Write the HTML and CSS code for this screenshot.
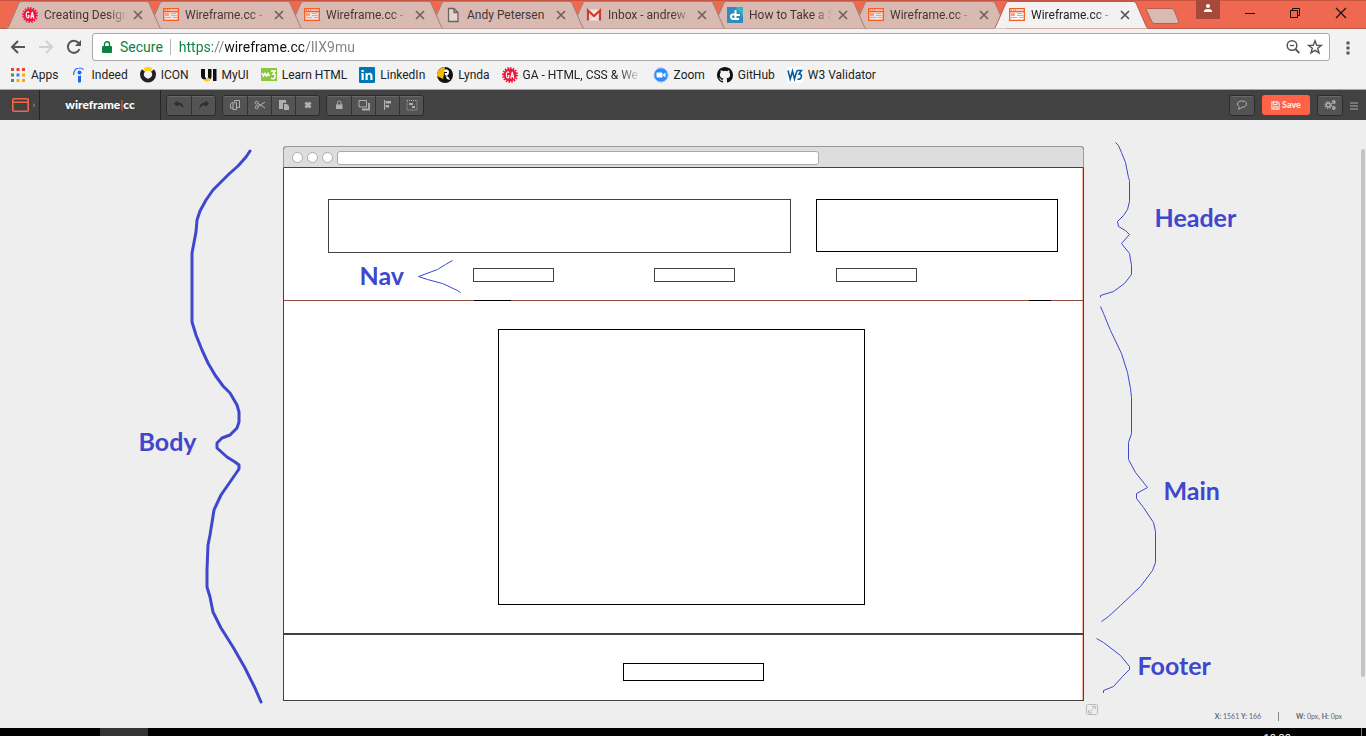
FILE: index.html
```html
<!DOCTYPE html>
<html lang="en">
<head>
<meta charset="utf-8">
<title>Wireframe.cc</title>
<link rel="stylesheet" href="styles.css">
</head>
<body>
<svg class="defs" aria-hidden="true">
  <symbol id="tab-shape" viewBox="0 0 154 29"><path d="M0 28.500L1.500 27L12 3Q13 1.500 15 1.500H139Q141 1.500 142 3L152.500 27L154 28.500"/></symbol>
  <symbol id="i-wire" viewBox="0 0 16 16"><path fill="#fff" d="M1 2h14v12H1z" opacity=".6"/><path fill="none" stroke="#ff5a1f" stroke-width="1.300" d="M.7 1.700h14.600v11.600H.7zM0 4.500h16"/><path stroke="#ff5a1f" stroke-dasharray="1 1" d="M2 3h5"/><path fill="#ff9d75" d="M2 6h4v3H2zM8 6h5v1H8zM8 8h6v1H8zM2 10h6v1H2zM10 10h4v1h-4z"/></symbol>
  <symbol id="i-ga" viewBox="0 0 16 16"><circle cx="8" cy="8" r="6.500" fill="#f0143c"/><circle cx="8" cy="8" r="7" fill="none" stroke="#f0143c" stroke-width="2" stroke-dasharray="1.400 1.340"/><path fill="none" stroke="#fff" stroke-width="1.200" d="M7 5.700Q6.500 4.600 5.300 5Q4.300 5.400 4.300 8T5.600 11Q7 11 7 8.500H5.800M8.800 11.500L10.300 5L11.800 11.500M9.200 9.500h2.200"/></symbol>
  <symbol id="i-close" viewBox="0 0 10 10"><path stroke="currentColor" stroke-width="1.700" d="M1 1L9 9M9 1L1 9"/></symbol>
</svg>

<header class="browser">
  <div class="tabstrip">
    <div class="tabs">
      <div class="tab"><svg class="shape"><use href="#tab-shape"/></svg><svg class="fav"><use href="#i-ga"/></svg><button class="tab-title fade">Creating Design</button><button class="tab-close" aria-label="Close tab"><svg><use href="#i-close"/></svg></button></div>
      <div class="tab"><svg class="shape"><use href="#tab-shape"/></svg><svg class="fav"><use href="#i-wire"/></svg><button class="tab-title fade">Wireframe.cc -</button><button class="tab-close" aria-label="Close tab"><svg><use href="#i-close"/></svg></button></div>
      <div class="tab"><svg class="shape"><use href="#tab-shape"/></svg><svg class="fav"><use href="#i-wire"/></svg><button class="tab-title fade">Wireframe.cc -</button><button class="tab-close" aria-label="Close tab"><svg><use href="#i-close"/></svg></button></div>
      <div class="tab"><svg class="shape"><use href="#tab-shape"/></svg><svg class="fav" viewBox="0 0 16 16"><path fill="#e6d3ce" stroke="#71625f" stroke-width="1.300" d="M3.500 1.500h5.500l4 4v9H3.500zM9 1.500v4h4"/></svg><button class="tab-title">Andy Petersen</button><button class="tab-close" aria-label="Close tab"><svg><use href="#i-close"/></svg></button></div>
      <div class="tab"><svg class="shape"><use href="#tab-shape"/></svg><svg class="fav" viewBox="0 0 16 16"><path fill="#efe5e3" d="M1 2.500h14v11H1z"/><path fill="none" stroke="#d9c7c4" d="M3 13l5-5 5 5"/><path fill="none" stroke="#d5392d" stroke-width="2.200" d="M2 13.500V3.500L8 9l6-5.500v10"/></svg><button class="tab-title fade">Inbox - andrew</button><button class="tab-close" aria-label="Close tab"><svg><use href="#i-close"/></svg></button></div>
      <div class="tab"><svg class="shape"><use href="#tab-shape"/></svg><svg class="fav" viewBox="0 0 16 16"><path fill="#318cbb" d="M0 0h16v16H0z"/><path fill="#31b6c5" d="M8 0h8v9z"/><path fill="none" stroke="#fff" stroke-width="2" d="M8.500 3v10M8.500 8H13M8 7.500H6Q4 7.500 4 9.500T6 12H12"/></svg><button class="tab-title fade">How to Take a S</button><button class="tab-close" aria-label="Close tab"><svg><use href="#i-close"/></svg></button></div>
      <div class="tab"><svg class="shape"><use href="#tab-shape"/></svg><svg class="fav"><use href="#i-wire"/></svg><button class="tab-title fade">Wireframe.cc -</button><button class="tab-close" aria-label="Close tab"><svg><use href="#i-close"/></svg></button></div>
      <div class="tab active"><svg class="shape"><use href="#tab-shape"/></svg><svg class="fav"><use href="#i-wire"/></svg><button class="tab-title fade">Wireframe.cc -</button><button class="tab-close" aria-label="Close tab"><svg><use href="#i-close"/></svg></button></div>
    </div>
    <button class="new-tab" aria-label="New tab"><svg viewBox="0 0 36 18"><path fill="#d9bab3" stroke="#b5604f" d="M2.500 1.500H26Q28 1.500 29 3L33.500 14Q34 16.500 32 16.500H10Q8 16.500 7 15L1.500 3Q1 1.500 2.500 1.500z"/></svg></button>
    <div class="window-controls">
      <button class="profile" aria-label="Profile"><svg viewBox="0 0 24 19"><circle cx="12" cy="6" r="2" fill="#fff"/><path fill="#fff" d="M8 12V11Q8 9 12 9T16 11V12z"/></svg></button>
      <button aria-label="Minimize"><svg viewBox="0 0 46 28"><path stroke="#111" d="M19 13.500h10"/></svg></button>
      <button aria-label="Restore"><svg viewBox="0 0 46 28"><path fill="none" stroke="#111" d="M18.500 10.500h7v7h-7zM20.500 10.500v-2h7v7h-2"/></svg></button>
      <button aria-label="Close"><svg viewBox="0 0 46 28"><path stroke="#111" stroke-width="1.200" d="M18 8L28 18M28 8L18 18"/></svg></button>
    </div>
  </div>

  <div class="navrow">
    <button class="nav-btn" aria-label="Back"><svg viewBox="0 0 16 16"><path d="M15 8H2M8 2L2 8l6 6"/></svg></button>
    <button class="nav-btn" aria-label="Forward" disabled><svg viewBox="0 0 16 16"><path d="M1 8h13M8 2l6 6-6 6"/></svg></button>
    <button class="nav-btn" aria-label="Reload"><svg viewBox="0 0 16 16"><path d="M13.500 10A6 6 0 1 1 12.500 4L14 5.500"/><path class="solid" d="M15 1v6H9z"/></svg></button>
    <form class="omnibox">
      <svg class="lock" viewBox="0 0 10 12"><path fill="#0b8043" d="M1 5h8q1 0 1 1v5q0 1-1 1H1q-1 0-1-1V6q0-1 1-1z"/><path fill="none" stroke="#0b8043" stroke-width="1.400" d="M2.500 5.500V3.200a2.500 2.500 0 0 1 5 0v2.300"/></svg>
      <label for="url">Secure</label>
      <input id="url" type="text" value="https://wireframe.cc/lIX9mu">
      <button type="button" aria-label="Zoom"><svg viewBox="0 0 16 16"><circle cx="7" cy="6.500" r="4.800" fill="none" stroke="#555" stroke-width="1.500"/><path stroke="#555" stroke-width="1.300" d="M4.800 6.500h4.400"/><path stroke="#555" stroke-width="1.800" d="M10.300 10l4 4"/></svg></button>
      <button type="button" aria-label="Bookmark"><svg viewBox="0 0 16 16"><path fill="none" stroke="#555" stroke-width="1.400" d="M8 1.800l1.700 4.400 4.700.2-3.700 2.900 1.300 4.600L8 11.300l-4 2.600 1.300-4.600L1.600 6.400l4.700-.2z"/></svg></button>
    </form>
    <button class="menu-btn" aria-label="Menu"><svg viewBox="0 0 4 14"><path fill="#555" d="M.5 1h3v3h-3zM.5 6h3v3h-3zM.5 11h3v3h-3z"/></svg></button>
  </div>

  <nav class="bookmarks">
    <a href="#"><svg viewBox="0 0 16 16"><path fill="#ea4335" d="M1 1h3v3H1zM6.500 1h3v3h-3zM12 1h3v3h-3z"/><path fill="#34a04f" d="M1 6.500h3v3H1zM1 12h3v3H1z"/><path fill="#2f80ed" d="M6.500 6.500h3v3h-3z"/><path fill="#f9ab00" d="M12 6.500h3v3h-3zM6.500 12h3v3h-3zM12 12h3v3h-3z"/></svg>Apps</a>
    <a href="#"><svg viewBox="0 0 16 16"><circle cx="8.500" cy="5.500" r="2" fill="#2164f3"/><path fill="none" stroke="#2164f3" stroke-width="1.200" d="M2.500 8Q3 1.200 8 1Q10.500 .8 12.500 2.500"/><path fill="#2164f3" d="M7 8.500q1.500 1 3-.300V15q-1.500 1.500-3 0z"/></svg>Indeed</a>
    <a href="#"><svg viewBox="0 0 16 16"><path fill="none" stroke="#222" stroke-width="4" d="M3.500 3.500a6 6 0 1 0 9 0"/><path fill="#ffcd00" d="M4 1q4-2 8 0l-1 3.500q-3-1.500-6 0z"/></svg>ICON</a>
    <a href="#"><svg viewBox="0 0 16 16"><path fill="#111" d="M0 2h4v8l2 2.500H3q-3-1-3-4zM7 2h3.500v8q0 1-1 2L7 11zM12 2h3.500v12H12z"/><path fill="#ffcd00" d="M2.500 12.500Q6 13 7 10.500q1 2 3 1.500-2 3-4.500 2.500-2 0-3-2z"/></svg>MyUI</a>
    <a href="#"><svg viewBox="0 0 16 16"><path fill="#8cc63f" d="M0 1h16v13H0z"/><path fill="none" stroke="#fff" stroke-width="1.500" d="M1 6l1.500 3L4 6.500 5.500 9 7 6.500 8.500 9M10 4h4l-2 3q3 0 2 3t-4 1"/></svg>Learn HTML</a>
    <a href="#"><svg viewBox="0 0 16 16"><rect width="16" height="16" rx="1" fill="#0077b5"/><path fill="#fff" d="M2.500 6h2.200v7H2.500zM2.500 3h2.200v2H2.500zM6.500 6h2v1q2-2 4-.500 1 1 1 2.500v4h-2.200V9q0-1.500-1.200-1.500T8.700 9v4H6.500z"/></svg>LinkedIn</a>
    <a href="#"><svg viewBox="0 0 16 16"><circle cx="8" cy="8" r="8" fill="#111"/><path fill="#f8b900" d="M8 0A8 8 0 0 0 0 9l6 3 1-5z"/><path fill="#fff" d="M7 3q3-2 5 1 .500 3-2 5 2 1 3 4l-3-1-2-4z"/><path fill="#111" d="M7 5h3v1H7zM8 8l2 1-1 1z"/></svg>Lynda</a>
    <a href="#"><svg><use href="#i-ga"/></svg><span class="clip">GA - HTML, CSS &amp; We</span></a>
    <a href="#"><svg viewBox="0 0 16 16"><circle cx="8" cy="8" r="7.200" fill="#2d8cff" stroke="#b5d5ff"/><path fill="#fff" d="M3.500 5.500h5q1 0 1 1v4h-5q-1 0-1-1zM10 7.500l2.500-2v5l-2.500-2z"/></svg>Zoom</a>
    <a href="#"><svg viewBox="0 0 16 16"><path fill="#111" d="M8 0C3.580 0 0 3.580 0 8c0 3.540 2.290 6.530 5.470 7.590.4.070.550-.170.550-.380 0-.190-.010-.820-.010-1.490-2.010.370-2.530-.490-2.690-.940-.090-.230-.480-.940-.820-1.130-.280-.150-.680-.520-.010-.530.630-.010 1.080.580 1.230.820.720 1.210 1.870.870 2.330.660.070-.520.280-.870.510-1.070-1.780-.200-3.640-.890-3.640-3.950 0-.870.310-1.590.820-2.150-.080-.200-.360-1.020.080-2.120 0 0 .670-.210 2.200.820a7.600 7.600 0 0 1 4 0c1.530-1.040 2.200-.820 2.200-.820.440 1.100.160 1.920.080 2.120.510.560.820 1.270.820 2.150 0 3.070-1.870 3.750-3.650 3.950.290.250.540.730.540 1.480 0 1.070-.010 1.930-.010 2.200 0 .210.150.460.550.380A8.010 8.010 0 0 0 16 8c0-4.420-3.580-8-8-8z"/></svg>GitHub</a>
    <a href="#"><svg viewBox="0 0 16 16"><path fill="#fff" d="M0 0h16v16H0z"/><path fill="none" stroke="#0a5a9c" stroke-width="1.600" d="M1 3.500L3.200 12 5.500 4l2 8L10 3.500M10 3.500h4.500L12 7q3 0 2.300 3T10.500 12"/></svg>W3 Validator</a>
  </nav>
</header>

<div class="appbar">
  <button class="device" aria-label="Choose device"><svg viewBox="0 0 24 14"><path fill="none" stroke="#f4644a" stroke-width="1.600" d="M1.800.8h13.400q1 0 1 1v10.400q0 1-1 1H1.800q-1 0-1-1V1.800q0-1 1-1zM1 4.200h15"/><path fill="#888" d="M21.500 5l1.800 2.200-1.800 2.200z"/></svg></button>
  <a class="brand" href="#">wireframe<span>|</span>cc</a>
  <div class="tools">
    <div class="group">
      <button class="dim" aria-label="Undo"><svg viewBox="0 0 12 12"><path d="M1 4.500L4.500 1.500v2Q11 3.200 10.500 10 9 6 4.500 6v2z"/></svg></button>
      <button class="dim" aria-label="Redo"><svg viewBox="0 0 12 12"><path d="M11 4.500L7.500 1.500v2Q1 3.200 1.500 10 3 6 7.500 6v2z"/></svg></button>
    </div>
    <div class="group">
      <button aria-label="Copy"><svg viewBox="0 0 12 12"><path class="line" d="M5.500 3V1.500h5v7H7M4 5.500V3L1.500 5v4H4M4 10.500v-5L6 3.500h1.500v7z"/></svg></button>
      <button aria-label="Cut"><svg viewBox="0 0 12 12"><path class="line" d="M4 7.500L11 3M4 4.500L11 9"/><circle class="line" cx="2.700" cy="3.700" r="1.500"/><circle class="line" cx="2.700" cy="8.300" r="1.500"/></svg></button>
      <button aria-label="Paste"><svg viewBox="0 0 12 12"><path d="M1 1h7v3H5v6H1z"/><path d="M6 5h3l2 2v4H6z"/></svg></button>
      <button aria-label="Delete"><svg viewBox="0 0 12 12"><path class="thick" d="M3.500 3.500l5 5M8.500 3.500l-5 5"/></svg></button>
    </div>
    <div class="group">
      <button aria-label="Lock"><svg viewBox="0 0 12 12"><path d="M3 5.500h6.500v4.500H3z"/><path class="line" d="M4.500 6V3.500q0-1.500 1.700-1.500T8 3.500V6"/></svg></button>
      <button aria-label="Arrange"><svg viewBox="0 0 12 12"><path class="line" d="M1 1.500h7.500v6.500H1z"/><path class="line" stroke-width="1.800" d="M4 10.500h7V4"/></svg></button>
      <button aria-label="Align"><svg viewBox="0 0 12 12"><path d="M2 1h1v10H2zM3.500 2H9v2.500H3.500zM3.500 6H7v2.500H3.500z"/></svg></button>
      <button aria-label="Select group"><svg viewBox="0 0 12 12"><path class="line" stroke-dasharray="1 1" d="M1 1.500h10v9.500H1z"/><path d="M3 4h4v2H3zM6 7h3v2H6z"/></svg></button>
    </div>
  </div>
  <div class="actions">
    <div class="group"><button aria-label="Comments"><svg viewBox="0 0 12 12"><path class="line" d="M6 2q4.500 0 4.500 3T6 8.200Q4 10 2.500 10.300 3.500 9 3 7.500 1.500 6.500 1.500 5 1.500 2 6 2z"/></svg></button></div>
    <button class="save"><svg viewBox="0 0 10 10"><path fill="none" stroke="#ffe5df" stroke-width="1.200" d="M1 1h6.500L9 2.500V9H1zM3 1v3h3.500V1M3 9V6.500h4V9"/></svg>Save</button>
    <div class="group"><button aria-label="Settings"><svg viewBox="0 0 12 12"><circle class="cog" cx="4.300" cy="6" r="2"/><circle class="teeth" cx="4.300" cy="6" r="3.300"/><circle class="cog" cx="9.800" cy="3" r="1.200"/><circle class="cog" cx="9.800" cy="9" r="1.200"/></svg></button></div>
    <button class="more" aria-label="Menu"><svg viewBox="0 0 8 8"><path stroke="#aaa" d="M0 1.500h8M0 4.500h8M0 7.500h8"/></svg></button>
  </div>
</div>

<main class="canvas">
  <div class="stage">
    <div class="frame">
      <div class="frame-bar"><i></i><i></i><i></i><input type="text" aria-label="Frame address"></div>
      <div class="frame-head">
        <div class="row"><div class="box title"></div><div class="box side"></div></div>
        <div class="row links"><div class="box"></div><div class="box"></div><div class="box"></div></div>
      </div>
      <div class="rule"><i></i><i></i></div>
      <div class="frame-main"><div class="box"></div></div>
      <div class="frame-foot"><div class="box"></div></div>
    </div>
    <svg class="ink" viewBox="0 0 1366 736">
      <path class="bold" d="M250 151L246 157 238 166 229 174 213 190 206 200 200 211 197 220 196 232 192 253 192 322 196 335 202 350 208 363 215 375 223 386 230 393 237 405 239 412 239 422 237 428 230 435 222 438 217 443 217 448 227 457 235 462 239 465 239 469 230 482 221 495 214 510 210 535 208 545 207 570 207 587 210 597 213 612 221 628 233 647 245 668 255 688 261 702"/>
      <path d="M1115.500 142.500L1118.500 145.500 1121.500 152.500 1125.500 162.500 1128.500 177.500 1129.500 180.500V201.500L1127.500 209.500 1123.500 215.500 1117.500 221.500 1118.500 226.500 1125.500 230.500 1129.500 234.500 1121.500 243.500 1129.500 253.500 1131.500 265.500V274.500L1124.500 283.500 1113.500 291.500 1100.500 295.500V297.500"/>
      <path d="M1100.500 306.500L1103.500 313.500 1110.500 330.500 1121.500 353.500 1127.500 372.500 1130.500 388.500 1131.500 397.500V433.500L1128.500 442.500V459.500L1135.500 472.500 1147.500 487.500 1136.500 493.500V498.500L1143.500 507.500 1153.500 522.500 1155.500 531.500V562.500L1152.500 570.500 1140.500 586.500 1120.500 605.500 1108.500 616.500 1101.500 621.500"/>
      <path d="M1096.500 638.500L1103.500 642.500 1120.500 655.500 1129.500 666.500V669.500L1122.500 676.500 1113.500 686.500 1103.500 690.500V693"/>
      <path d="M452.500 260.500L445.500 264.500 437.500 269.500 418.500 276.500 427.500 279.500 442.500 283.500 457.500 290.500 460.500 292.500"/>
    </svg>
    <span class="note note-body">Body</span>
    <span class="note note-nav">Nav</span>
    <span class="note note-header">Header</span>
    <span class="note note-main">Main</span>
    <span class="note note-footer">Footer</span>
    <button class="resize" aria-label="Resize"><svg viewBox="0 0 12 12"><rect x=".5" y=".5" width="11" height="10" rx="1" fill="none" stroke="#bbb"/><path fill="none" stroke="#bbb" d="M3 8.500l6-6M6 2.500h3.500V5M2.500 6v3H6"/></svg></button>
  </div>
  <div class="scrollbar"></div>
  <div class="status"><span><b>X:</b> 1561 <b>Y:</b> 166</span><i></i><span><b>W:</b> 0px, <b>H:</b> 0px</span></div>
</main>

<footer class="taskbar"><div class="task"></div><time>10:20</time><div class="desktop-edge"></div></footer>
</body>
</html>
```
FILE: styles.css
```css
* { box-sizing: border-box; }
body { margin: 0; height: 100vh; display: flex; flex-direction: column; overflow: hidden; font: 12px/16px Roboto, "Liberation Sans", sans-serif; color: #222; background: #eee; }
button { border: 0; padding: 0; margin: 0; background: none; font: inherit; color: inherit; display: flex; align-items: center; justify-content: center; }
svg { display: block; flex: none; }
.defs { position: absolute; width: 0; height: 0; }
.browser { flex: none; background: #f2f2f2; border-bottom: 1px solid #a5a7a5; }

.tabstrip { display: flex; align-items: flex-start; height: 29px; padding: 0 2px 0 7px; background: #ef6950; box-shadow: inset 0 -1px #b5604f, inset 0 1px #c9543f; }
.tabs { display: flex; isolation: isolate; }
.tab { position: relative; width: 154px; height: 29px; margin-right: -13px; padding: 1px 16px 0 15px; display: flex; align-items: center; color: #463633; z-index: 1; }
.tab:nth-child(1) { z-index: 8; }
.tab:nth-child(2) { z-index: 7; }
.tab:nth-child(3) { z-index: 6; }
.tab:nth-child(4) { z-index: 5; }
.tab:nth-child(5) { z-index: 4; }
.tab:nth-child(6) { z-index: 3; }
.tab:nth-child(7) { z-index: 2; }
.tab.active { z-index: 9; color: #222; margin-right: 0; }
.shape { position: absolute; inset: 0; width: 154px; height: 29px; z-index: -1; fill: #d9bab3; stroke: #a3807b; }
.tab:not(.active) { box-shadow: inset 0 -1px #a3807b; }
.active .shape { fill: #f2f2f2; stroke: #b5604f; }
.fav { width: 16px; height: 16px; margin-right: 6px; }
.tab-title { width: 84px; justify-content: flex-start; white-space: nowrap; overflow: hidden; }
.fade { -webkit-mask-image: linear-gradient(90deg, #000 64px, transparent 84px); mask-image: linear-gradient(90deg, #000 64px, transparent 84px); }
.tab-close { margin-left: 5px; color: #71625f; }
.active .tab-close { color: #555; }
.tab-close svg { width: 10px; height: 10px; }
.new-tab { margin: 7px 0 0 -3px; }
.new-tab svg { width: 36px; height: 18px; }
.window-controls { margin-left: auto; display: flex; align-items: flex-start; }
.window-controls svg { width: 46px; height: 28px; }
.window-controls .profile { background: #a54a3a; margin-right: 6px; }
.window-controls .profile svg { width: 24px; height: 19px; }

.navrow { display: flex; align-items: center; gap: 12px; height: 33px; padding: 3px 14px 0 10px; }
.nav-btn svg { width: 16px; height: 16px; fill: none; stroke: #555; stroke-width: 2; }
.nav-btn:disabled svg { stroke: #d0d0d0; }
.nav-btn .solid { fill: #555; stroke: none; }
.omnibox { flex: 1; height: 28px; margin: 0 2px 0 -2px; padding: 0 6px 0 9px; display: flex; align-items: center; background: #fff; border: 1px solid #a9a9a9; border-radius: 3px; font-size: 14px; }
.lock { width: 10px; height: 12px; margin-right: 8px; }
.omnibox label { color: #0b8043; padding-right: 7px; border-right: 1px solid #b5b5b5; }
.omnibox input { flex: 1; min-width: 0; border: 0; outline: 0; padding: 0; margin-left: 8px; font: inherit; color: transparent; background: linear-gradient(90deg, #0b8043 34px, #808080 34px 46px, #111 46px 125px, #808080 125px); -webkit-background-clip: text; background-clip: text; }
.omnibox button { margin-left: 6px; }
.omnibox button svg { width: 16px; height: 16px; }
.menu-btn { width: 8px; }
.menu-btn svg { width: 4px; height: 15px; }

.bookmarks { display: flex; align-items: center; height: 27px; padding: 0 10px 2px; gap: 12px; }
.bookmarks a { display: flex; align-items: center; gap: 5px; color: #222; text-decoration: none; white-space: nowrap; }
.bookmarks svg { width: 16px; height: 16px; }
.clip { width: 118px; overflow: hidden; -webkit-mask-image: linear-gradient(90deg, #000 95px, transparent 118px); mask-image: linear-gradient(90deg, #000 95px, transparent 118px); }

.appbar { flex: none; display: flex; align-items: center; height: 30px; background: #424242; font-family: Lato, sans-serif; }
.device { width: 40px; height: 100%; border-right: 1px solid #252525; padding-left: 8px; }
.device svg { width: 24px; height: 14px; }
.brand { width: 121px; line-height: 30px; text-align: center; color: #fff; font-weight: 900; text-decoration: none; border-right: 1px solid #252525; }
.brand span { color: #f4644a; font-weight: 400; }
.tools, .actions { display: flex; align-items: center; gap: 6px; padding-left: 5px; }
.actions { margin-left: auto; padding: 0 8px 0 0; gap: 7px; }
.group { display: flex; border: 1px solid #2c2c2c; border-radius: 3px; background: #535353; box-shadow: inset 0 1px #686868; }
.group button { width: 24px; height: 19px; color: #b0b0b0; }
.group button + button { border-left: 1px solid #333; }
.group svg { width: 12px; height: 12px; fill: currentColor; }
.group .dim { color: #2e2e2e; }
.line { fill: none; stroke: currentColor; }
.thick { stroke: currentColor; stroke-width: 3; }
.cog { fill: none; stroke: currentColor; stroke-width: 1.4; }
.teeth { fill: none; stroke: currentColor; stroke-width: 1.2; stroke-dasharray: 1.3 1.3; }
.save { width: 48px; height: 20px; gap: 2px; border-radius: 3px; background: #ff6347; color: #ffe9e4; font-size: 9px; font-weight: 900; }
.save svg { width: 9px; height: 9px; }
.more svg { width: 8px; height: 9px; }

.canvas { flex: 1; min-height: 0; position: relative; padding-top: 26px; background: #eee; }
.stage { position: relative; width: 801px; margin: 0 auto; }
.frame { background: #fff; border: 1px solid #424242; border-top: 0; border-radius: 4px 4px 0 0; box-shadow: inset -1px 0 #f5b5a5; }
.frame-bar { display: flex; align-items: center; gap: 4px; height: 22px; margin: 0 -1px; padding: 1px 8px 0; background: #ddd; border: 1px solid #999; border-bottom-color: #424242; border-radius: 4px 4px 0 0; }
.frame-bar i { width: 11px; height: 11px; border: 1px solid #aaa; border-radius: 50%; background: #fff; }
.frame-bar input { width: 482px; height: 14px; padding: 0 4px; border: 1px solid #aaa; border-radius: 3px; background: #fff; }
.box { border: 1px solid #424242; background: #fff; }
.frame-head { height: 132px; padding: 31px 25px 0 44px; }
.row { display: flex; justify-content: space-between; }
.title { width: 463px; height: 54px; }
.side { width: 242px; height: 53px; border-color: #000; }
.links { margin-top: 15px; padding: 0 141px 0 145px; }
.links .box { width: 81px; height: 14px; }
.rule { display: flex; justify-content: space-between; height: 1px; padding: 0 32px 0 190px; background: #8e4a3c; }
.rule i { width: 37px; background: #000; }
.rule i + i { width: 22px; }
.frame-main { height: 334px; padding: 28px 0 0 214px; border-bottom: 2px solid #424242; }
.frame-main .box { width: 367px; height: 276px; border-color: #000; }
.frame-foot { height: 65px; padding: 28px 0 0 339px; }
.frame-foot .box { width: 141px; height: 18px; border-color: #000; }

.ink { position: absolute; left: -283px; top: -146px; width: 1366px; height: 736px; pointer-events: none; fill: none; stroke: #3f48cc; }
.ink .bold { stroke-width: 3; stroke-linejoin: round; stroke-linecap: round; }
.note { position: absolute; font: 700 25px/30px Lato, sans-serif; color: #3f48cc; }
.note-body { left: -144px; top: 280px; }
.note-nav { left: 77px; top: 114px; }
.note-header { left: 872px; top: 56px; }
.note-main { left: 881px; top: 329px; }
.note-footer { left: 855px; top: 504px; }
.resize { position: absolute; left: 803px; top: 558px; }
.resize svg { width: 12px; height: 12px; }
.scrollbar { position: absolute; right: 1px; top: 29px; width: 4px; height: 528px; border-radius: 2px; background: #c4c4c4; }
.status { position: absolute; right: 24px; bottom: 7px; display: flex; align-items: center; gap: 17px; font: 7px/10px Lato, sans-serif; color: #666; }
.status i { width: 1px; height: 9px; background: #888; }

.taskbar { flex: none; display: flex; height: 8px; padding: 0 4px 0 100px; background: #000; color: #fff; overflow: hidden; }
.task { width: 48px; background: #333; }
.taskbar time { margin-left: auto; padding-top: 3px; font-size: 11px; }
.desktop-edge { width: 1px; margin-left: 70px; background: #777; }
```
